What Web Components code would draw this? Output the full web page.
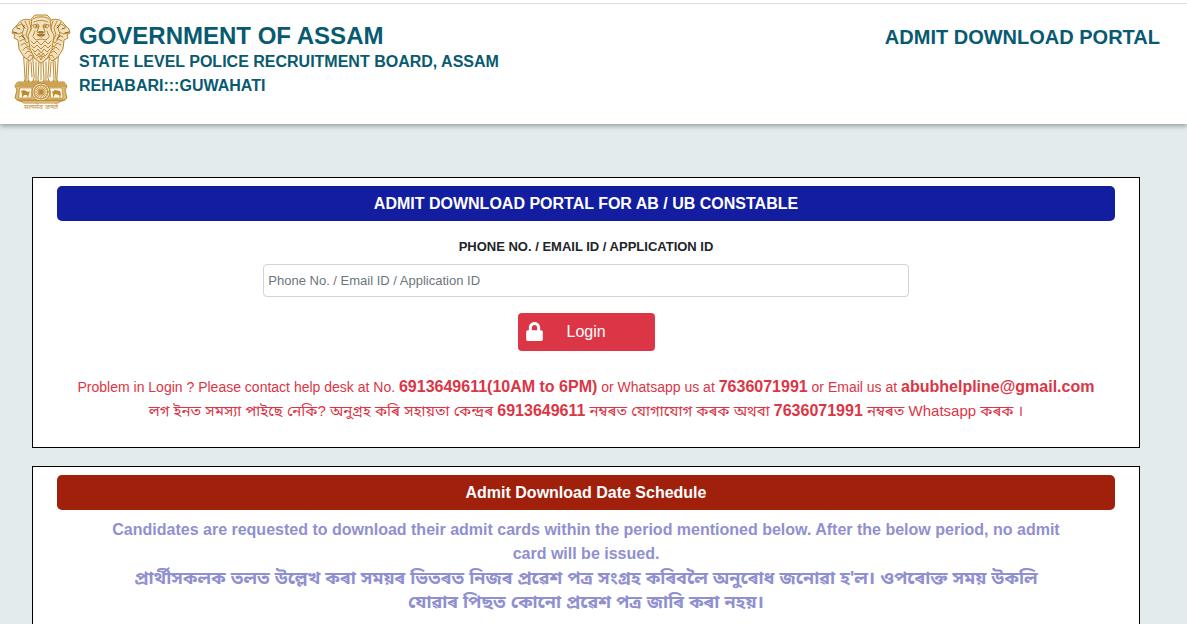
<!DOCTYPE html>
<html lang="en">
<head>
<meta charset="utf-8">
<meta name="viewport" content="width=device-width, initial-scale=1">
<title>Admit Download Portal</title>
<style>
body {
  margin: 0;
  font-family: "Liberation Sans", Arial, "Noto Sans Bengali", "Noto Sans", sans-serif;
  font-size: 16px;
  line-height: 24px;
  color: #212529;
  background: #e3ebed;
}
</style>
</head>
<body>
<admit-page>
  <site-header slot="header">
    <state-emblem slot="logo"></state-emblem>
    <span slot="title">GOVERNMENT OF ASSAM</span>
    <span slot="board">STATE LEVEL POLICE RECRUITMENT BOARD, ASSAM</span>
    <span slot="place">REHABARI:::GUWAHATI</span>
    <span slot="portal">ADMIT DOWNLOAD PORTAL</span>
  </site-header>

  <info-card tone="blue">
    <span slot="heading">ADMIT DOWNLOAD PORTAL FOR AB / UB CONSTABLE</span>
    <login-form></login-form>
    <help-text></help-text>
  </info-card>

  <info-card tone="red">
    <span slot="heading">Admit Download Date Schedule</span>
    <schedule-note>
      <span>Candidates are requested to download their admit cards within the period mentioned below. After the below period, no admit card will be issued.</span>
      <span lang="as" slot="local">প্ৰাৰ্থীসকলক তলত উল্লেখ কৰা সময়ৰ ভিতৰত নিজৰ প্ৰৱেশ পত্ৰ সংগ্ৰহ কৰিবলৈ অনুৰোধ জনোৱা হ'ল। ওপৰোক্ত সময় উকলি যোৱাৰ পিছত কোনো প্ৰৱেশ পত্ৰ জাৰি কৰা নহয়।</span>
    </schedule-note>
  </info-card>
</admit-page>

<script>
function define(name, html) {
  const template = document.createElement('template');
  template.innerHTML = html;

  customElements.define(name, class extends HTMLElement {
    constructor() {
      super();
      this.attachShadow({ mode: 'open' });
      this.shadowRoot.appendChild(template.content.cloneNode(true));
    }
  });
}

define('admit-page', `
<style>
:host {
  display: flex;
  flex-direction: column;
  height: 100vh;
  overflow: hidden;
}

main {
  display: flex;
  flex-direction: column;
  gap: 18px;
  padding: 53px 47px 0 32px;
}
</style>
<slot name="header"></slot>
<main><slot></slot></main>
`);

define('site-header', `
<style>
:host {
  display: block;
  padding-top: 3px;
  background: white;
  box-shadow: 0 2px 5px rgba(0, 0, 0, .35);
}

header {
  display: flex;
  align-items: flex-start;
  gap: 8px;
  padding: 10px 27px 13px 11px;
  border-top: 1px solid #dcdcdc;
  color: #075a70;
  font-weight: bold;
}

.names {
  flex: 1;
  padding-top: 6px;
}

h1, h2, p {
  margin: 0;
}

h1 {
  padding-top: 1px;
  font-size: 24px;
  line-height: 29px;
}

h2 {
  padding-top: 8px;
  font-size: 20px;
  line-height: 30px;
}
</style>
<header>
  <slot name="logo"></slot>
  <div class="names">
    <h1><slot name="title"></slot></h1>
    <p><slot name="board"></slot></p>
    <p><slot name="place"></slot></p>
  </div>
  <h2><slot name="portal"></slot></h2>
</header>
`);

define('state-emblem', `
<style>
:host {
  display: block;
}

svg {
  display: block;
  width: 60px;
  height: 97px;
  overflow: visible;
}

.motto {
  font: 7px "Noto Sans Devanagari", "Noto Sans", sans-serif;
}
</style>
<svg viewBox="0 0 60 97" fill="none" stroke="#bd8a30" stroke-width="1" stroke-linecap="round" stroke-linejoin="round" role="img" aria-label="State emblem">
  <!-- left lion -->
  <path fill="#f1e2c3" d="M20 6C14 4 9 6 7 10L2 15 1 19 4 21 3 24 7 26 8 35 13 43 19 47 23 42 22 10Z"/>
  <path d="M5 13l5-3 4 2M3 19l5 1 3-2M8 23l5-2M10 8l3 6-2 6 3 5M14 7l3 7-2 7 3 6M18 7l2 7-2 8 3 7M9 27l4-2 3 4 4-3M10 31l4-2 3 4 4-3M12 36l3-3 4 3 3-3M14 40l3-3 4 2M17 44l2-3 3 1"/>
  <path stroke="#8f5d12" d="M6 14l3 1M2 18l4 1M12 12l2 2M11 22l3 3"/>
  <!-- right lion -->
  <g transform="matrix(-1 0 0 1 60 0)">
    <path fill="#f1e2c3" d="M20 6C14 4 9 6 7 10L2 15 1 19 4 21 3 24 7 26 8 35 13 43 19 47 23 42 22 10Z"/>
    <path d="M5 13l5-3 4 2M3 19l5 1 3-2M8 23l5-2M10 8l3 6-2 6 3 5M14 7l3 7-2 7 3 6M18 7l2 7-2 8 3 7M9 27l4-2 3 4 4-3M10 31l4-2 3 4 4-3M12 36l3-3 4 3 3-3M14 40l3-3 4 2M17 44l2-3 3 1"/>
    <path stroke="#8f5d12" d="M6 14l3 1M2 18l4 1M12 12l2 2M11 22l3 3"/>
  </g>
  <!-- front lion -->
  <path fill="#f1e2c3" d="M21 4l3-3h12l3 3 1 12 3 5-2 14-5 10-6 4-6-4-5-10-2-14 3-5Z"/>
  <path d="M22 5c4-3 12-3 16 0M23 8c4-2 10-2 14 0M22 11l5-1 1 3-4 1ZM38 11l-5-1-1 3 4 1ZM28 12l-2 6 4 2 4-2-2-6M26 20c2 4 6 4 8 0M24 17l-2 5M36 17l2 5M22 23l3 3 5-1 5 1 3-3M20 27l3 3 3-3 4 4 4-4 3 3 3-3M20 31l3 3 3-3 4 4 4-4 3 3 3-3M21 35l3 3 3-3 3 4 3-4 3 3 3-3M23 39l3 3 2-3 2 4 2-4 2 3 3-3M26 44l2-2 2 4 2-4 2 2"/>
  <path stroke="#8f5d12" stroke-width="1.4" d="M25 12h1M34 12h1M28 18h4M27 21h6"/>
  <!-- legs -->
  <path fill="#fffaf0" d="M13 43l5 4-1 18 2 5h-6l1-5ZM22 43l6 5-1 17 1 5h-7l2-6ZM38 43l-6 5 1 17-1 5h7l-2-6ZM47 43l-5 4 1 18-2 5h6l-1-5Z"/>
  <path d="M16 47l-1 19M25 48v18M35 48v18M44 47l1 19M20 48l1 15M40 48l-1 15M30 49v17M14 67h4M22 67h5M33 67h5M42 67h4"/>
  <!-- abacus -->
  <path fill="#dcbb7b" d="M7 68h46l3 4-2 4 2 8-4 3H8l-4-3 2-8-2-4Z"/>
  <path fill="#fff7e7" stroke-width=".7" d="M9 74h12l-1 10H8ZM39 74h12l1 10H40Z"/>
  <path d="M7 70h46M5 72h50M6 86h48"/>
  <path fill="#bd8a30" stroke="none" d="M10 77l3-1 4 2 2-1-1 3-1 4-1-3-3 0-2 3v-4ZM41 78l3-2 5 1 1 3-1 4-1-3-4-1-2 4v-4Z"/>
  <circle cx="30" cy="78" r="9" fill="#f1e2c3"/>
  <circle cx="30" cy="78" r="7"/>
  <circle cx="30" cy="78" r="2" fill="#8f5d12"/>
  <path stroke-width=".8" d="M30 71v14M23 78h14M25 73l10 10M35 73L25 83M27 72l6 12M33 72l-6 12M24 75l12 6M36 75l-12 6"/>
  <path fill="#f1e2c3" d="M10 87h40l-3 2H13Z"/>
  <text class="motto" x="30" y="95" text-anchor="middle" fill="#bd8a30" stroke="none">सत्यमेव जयते</text>
</svg>
`);

define('info-card', `
<style>
:host {
  --banner: #131da0;
  display: block;
  padding: 8px 24px 24px;
  border: 1px solid black;
  background: white;
}

:host([tone="red"]) {
  --banner: #a0200b;
}

h3 {
  margin: 0;
  padding: 6px 8px 5px;
  border-radius: 5px;
  background: var(--banner);
  color: white;
  font-size: 16px;
  line-height: 24px;
  text-align: center;
}
</style>
<h3><slot name="heading"></slot></h3>
<slot></slot>
`);

define('login-form', `
<style>
:host {
  display: block;
  padding: 16px 0 24px;
}

form {
  display: flex;
  flex-direction: column;
  align-items: center;
}

label {
  margin-bottom: 7px;
  font-size: 13px;
  line-height: 20px;
  font-weight: bold;
}

input {
  box-sizing: border-box;
  width: 61%;
  height: 33px;
  margin-bottom: 16px;
  padding: 4px;
  border: 1px solid #ced4da;
  border-radius: 4px;
  font: inherit;
  font-size: 13px;
}

input::placeholder {
  color: #6c757d;
  opacity: 1;
}

button {
  display: flex;
  align-items: center;
  gap: 24px;
  width: 137px;
  height: 38px;
  padding: 0 8px;
  border: 0;
  border-radius: 4px;
  background: #dc3545;
  color: white;
  font: inherit;
}

svg {
  width: 17px;
  height: 19px;
  padding-bottom: 2px;
}
</style>
<form>
  <label for="user">PHONE NO. / EMAIL ID / APPLICATION ID</label>
  <input id="user" type="text" placeholder="Phone No. / Email ID / Application ID">
  <button type="button">
    <svg viewBox="0 0 448 512" fill="white" aria-hidden="true"><path d="M400 224h-24v-72C376 68.200 307.800 0 224 0S72 68.200 72 152v72H48c-26.500 0-48 21.500-48 48v192c0 26.500 21.500 48 48 48h352c26.500 0 48-21.500 48-48V272c0-26.500-21.500-48-48-48zm-104 0H152v-72c0-39.700 32.300-72 72-72s72 32.300 72 72v72z"/></svg>
    <span>Login</span>
  </button>
</form>
`);

define('help-text', `
<style>
:host {
  display: block;
  color: #dc3545;
  font-size: 14px;
  line-height: 24px;
  text-align: center;
}

p {
  margin: 0 -12px;
}

[lang="as"] {
  font-size: 15px;
}

b {
  font-size: 16px;
}
</style>
<p>Problem in Login ? Please contact help desk at No. <b>6913649611(10AM to 6PM)</b> or Whatsapp us at <b>7636071991</b> or Email us at <b>abubhelpline@gmail.com</b></p>
<p lang="as">লগ ইনত সমস্যা পাইছে নেকি? অনুগ্ৰহ কৰি সহায়তা কেন্দ্ৰৰ <b>6913649611</b> নম্বৰত যোগাযোগ কৰক অথবা <b>7636071991</b> নম্বৰত Whatsapp কৰক ।</p>
`);

define('schedule-note', `
<style>
:host {
  display: block;
  padding: 8px 48px;
  color: #9090d0;
  font-weight: bold;
  text-align: center;
}

p {
  margin: 0;
}

.local {
  padding: 0 16px;
  font-size: 18px;
}
</style>
<p><slot></slot></p>
<p class="local"><slot name="local"></slot></p>
`);
</script>
</body>
</html>
